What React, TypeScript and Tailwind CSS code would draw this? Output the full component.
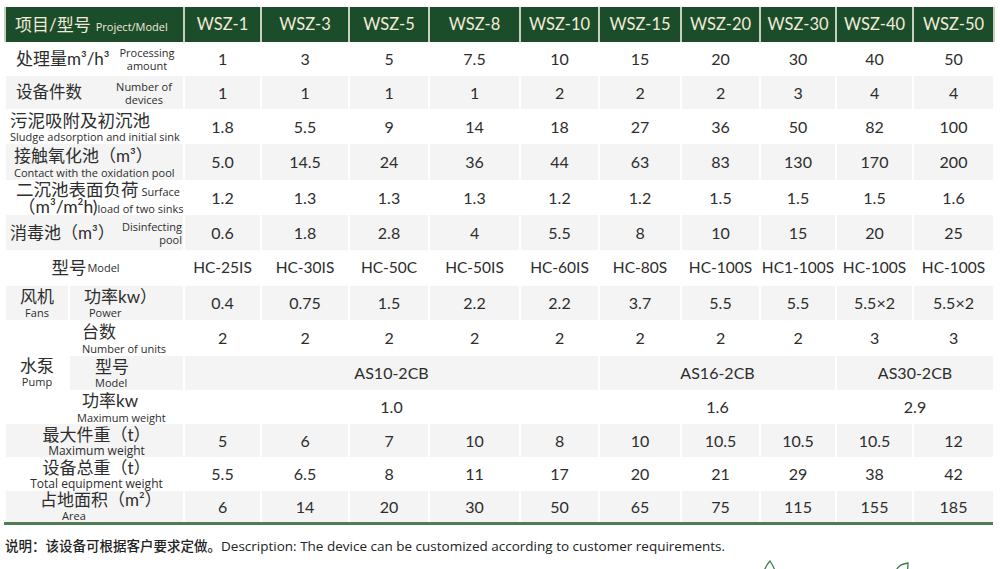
const cols = [64, 115, 77, 88, 80, 91, 79, 82, 79, 76, 77, 81];
const models = ["WSZ-1", "WSZ-3", "WSZ-5", "WSZ-8", "WSZ-10", "WSZ-15", "WSZ-20", "WSZ-30", "WSZ-40", "WSZ-50"];

function Vals({ v }: { v: string[] }) {
  return (
    <>
      {v.map((x, i) => (
        <td key={i} className="border-x-2 border-white text-center p-0 whitespace-nowrap">
          {x}
        </td>
      ))}
    </>
  );
}

// small english captions under / beside the chinese labels
function Small({ children, className = "" }: { children: React.ReactNode; className?: string }) {
  return (
    <span className={"font-['Open_Sans',sans-serif] text-[11px] leading-[12px] whitespace-nowrap " + className}>
      {children}
    </span>
  );
}

export default function App() {
  return (
    <div className="w-[1000px] h-[569px] overflow-hidden bg-white font-['Lato','Noto_Sans_CJK_SC',sans-serif] text-[#2d2d2d]">
      <table className="ml-[4px] mt-[7px] w-[989px] table-fixed border-collapse text-[16px]">
        <colgroup>
          {cols.map((w, i) => (
            <col key={i} style={{ width: w }} />
          ))}
        </colgroup>
        <thead>
          <tr className="h-[35px] bg-[#1c4d2b] text-[#f1ecd9]">
            <td colSpan={2} className="border-x-2 border-[#c9d0c0] p-0 pl-[9px] whitespace-nowrap">
              <span className="text-[17px]">项目/型号</span>
              <span className="font-['Open_Sans',sans-serif] text-[11px] ml-[5px]">Project/Model</span>
            </td>
            {models.map((m) => (
              <td key={m} className="border-x-2 border-[#c9d0c0] text-center p-0 text-[16.5px] whitespace-nowrap">
                {m}
              </td>
            ))}
          </tr>
        </thead>
        <tbody>
          {/* 处理量 */}
          <tr className="h-[34px]">
            <td colSpan={2} className="border-x-2 border-white p-0">
              <div className="flex items-center pl-[10px]">
                <span className="text-[17px] w-[101px]">处理量m³/h³</span>
                <Small className="flex flex-col items-center w-[60px] leading-[13px]">
                  <span>Processing</span>
                  <span>amount</span>
                </Small>
              </div>
            </td>
            <Vals v={["1", "3", "5", "7.5", "10", "15", "20", "30", "40", "50"]} />
          </tr>
          {/* 设备件数 */}
          <tr className="h-[33px] bg-[#f4f4f4]">
            <td colSpan={2} className="border-x-2 border-white p-0">
              <div className="flex items-center pl-[10px]">
                <span className="text-[16.5px] w-[99px]">设备件数</span>
                <Small className="flex flex-col items-center w-[58px] leading-[13px]">
                  <span>Number of</span>
                  <span>devices</span>
                </Small>
              </div>
            </td>
            <Vals v={["1", "1", "1", "1", "2", "2", "2", "3", "4", "4"]} />
          </tr>
          {/* 污泥 */}
          <tr className="h-[35px]">
            <td colSpan={2} className="border-x-2 border-white p-0">
              <div className="flex flex-col pl-[4px]">
                <span className="text-[17.5px] leading-[20px]">污泥吸附及初沉池</span>
                <Small>Sludge adsorption and initial sink</Small>
              </div>
            </td>
            <Vals v={["1.8", "5.5", "9", "14", "18", "27", "36", "50", "82", "100"]} />
          </tr>
          {/* 接触 */}
          <tr className="h-[36px] bg-[#f4f4f4]">
            <td colSpan={2} className="border-x-2 border-white p-0">
              <div className="flex flex-col pl-[8px]">
                <span className="text-[17px] leading-[20px]">接触氧化池（m³）</span>
                <Small className="text-[11.5px] leading-[13px]">Contact with the oxidation pool</Small>
              </div>
            </td>
            <Vals v={["5.0", "14.5", "24", "36", "44", "63", "83", "130", "170", "200"]} />
          </tr>
          {/* 二沉池 */}
          <tr className="h-[35px]">
            <td colSpan={2} className="border-x-2 border-white p-0">
              <div className="flex flex-col pl-[10px]">
                <div className="flex items-end leading-[17px] whitespace-nowrap">
                  <span className="text-[17.5px]">二沉池表面负荷</span>
                  <Small className="ml-[3px] leading-[13px]">Surface</Small>
                </div>
                <div className="flex items-end leading-[17px] whitespace-nowrap pl-[2px]">
                  <span className="text-[17.5px]">（m³/m²h)</span>
                  <Small className="leading-[13px]">load of two sinks</Small>
                </div>
              </div>
            </td>
            <Vals v={["1.2", "1.3", "1.3", "1.3", "1.2", "1.2", "1.5", "1.5", "1.5", "1.6"]} />
          </tr>
          {/* 消毒池 */}
          <tr className="h-[35px] bg-[#f4f4f4]">
            <td colSpan={2} className="border-x-2 border-white p-0">
              <div className="flex items-center pl-[4px]">
                <span className="text-[17px] w-[106px] whitespace-nowrap">消毒池（m³）</span>
                <Small className="flex flex-col items-end w-[66px] leading-[13px]">
                  <span>Disinfecting</span>
                  <span>pool</span>
                </Small>
              </div>
            </td>
            <Vals v={["0.6", "1.8", "2.8", "4", "5.5", "8", "10", "15", "20", "25"]} />
          </tr>
          {/* 型号 */}
          <tr className="h-[36px] text-[15.5px]">
            <td colSpan={2} className="border-x-2 border-white p-0">
              <div className="flex items-center justify-center pr-[18px]">
                <span className="text-[17.5px]">型号</span>
                <Small className="ml-[1px]">Model</Small>
              </div>
            </td>
            <Vals v={["HC-25IS", "HC-30IS", "HC-50C", "HC-50IS", "HC-60IS", "HC-80S", "HC-100S", "HC1-100S", "HC-100S", "HC-100S"]} />
          </tr>
          {/* 风机 */}
          <tr className="h-[34px] bg-[#f4f4f4]">
            <td className="border-x-2 border-white p-0">
              <div className="flex flex-col items-center">
                <span className="text-[17px] leading-[20px]">风机</span>
                <Small>Fans</Small>
              </div>
            </td>
            <td className="border-x-2 border-white p-0">
              <div className="flex flex-col pl-[14px]">
                <span className="text-[17px] leading-[20px] whitespace-nowrap">功率kw）</span>
                <Small className="pl-[5px]">Power</Small>
              </div>
            </td>
            <Vals v={["0.4", "0.75", "1.5", "2.2", "2.2", "3.7", "5.5", "5.5", "5.5×2", "5.5×2"]} />
          </tr>
          {/* 水泵 台数 */}
          <tr className="h-[36px]">
            <td rowSpan={3} className="border-x-2 border-white p-0 bg-white">
              <div className="flex flex-col items-center">
                <span className="text-[17px] leading-[20px]">水泵</span>
                <Small>Pump</Small>
              </div>
            </td>
            <td className="border-x-2 border-white p-0">
              <div className="flex flex-col pl-[12px]">
                <span className="text-[17px] leading-[20px]">台数</span>
                <Small className="text-[11.5px] leading-[13px]">Number of units</Small>
              </div>
            </td>
            <Vals v={["2", "2", "2", "2", "2", "2", "2", "2", "3", "3"]} />
          </tr>
          <tr className="h-[34px] bg-[#f4f4f4]">
            <td className="border-x-2 border-white p-0">
              <div className="flex flex-col pl-[25px]">
                <span className="text-[17px] leading-[20px]">型号</span>
                <Small>Model</Small>
              </div>
            </td>
            <td colSpan={5} className="border-x-2 border-white text-center p-0">AS10-2CB</td>
            <td colSpan={3} className="border-x-2 border-white text-center p-0">AS16-2CB</td>
            <td colSpan={2} className="border-x-2 border-white text-center p-0">AS30-2CB</td>
          </tr>
          <tr className="h-[34px]">
            <td className="border-x-2 border-white p-0">
              <div className="flex flex-col pl-[7px]">
                <span className="text-[17px] leading-[20px] pl-[5px]">功率kw</span>
                <Small className="text-[11.5px] leading-[13px]">Maximum weight</Small>
              </div>
            </td>
            <td colSpan={5} className="border-x-2 border-white text-center p-0">1.0</td>
            <td colSpan={3} className="border-x-2 border-white text-center p-0">1.6</td>
            <td colSpan={2} className="border-x-2 border-white text-center p-0">2.9</td>
          </tr>
          {/* 最大件重 */}
          <tr className="h-[33px] bg-[#f4f4f4]">
            <td colSpan={2} className="border-x-2 border-white p-0">
              <div className="flex flex-col items-center pl-[4px]">
                <span className="text-[17px] leading-[19px] whitespace-nowrap">最大件重（t）</span>
                <Small className="text-[12px] leading-[13px]">Maximum weight</Small>
              </div>
            </td>
            <Vals v={["5", "6", "7", "10", "8", "10", "10.5", "10.5", "10.5", "12"]} />
          </tr>
          {/* 设备总重 */}
          <tr className="h-[34px]">
            <td colSpan={2} className="border-x-2 border-white p-0">
              <div className="flex flex-col items-center pl-[4px]">
                <span className="text-[17px] leading-[19px] whitespace-nowrap">设备总重（t）</span>
                <Small className="text-[12px] leading-[13px]">Total equipment weight</Small>
              </div>
            </td>
            <Vals v={["5.5", "6.5", "8", "11", "17", "20", "21", "29", "38", "42"]} />
          </tr>
          {/* 占地面积 */}
          <tr className="h-[31px] bg-[#f4f4f4]">
            <td colSpan={2} className="border-x-2 border-white p-0">
              <div className="flex flex-col pl-[34px]">
                <span className="text-[17px] leading-[18px] whitespace-nowrap">占地面积（m²）</span>
                <Small className="pl-[22px] leading-[13px]">Area</Small>
              </div>
            </td>
            <Vals v={["6", "14", "20", "30", "50", "65", "75", "115", "155", "185"]} />
          </tr>
        </tbody>
      </table>
      <div className="ml-[4px] w-[989px] h-[3px] bg-[#4e7d55]" />
      <div className="flex items-center pl-[5px] pt-[11px] text-[#222] whitespace-nowrap">
        <span className="text-[13.5px] font-medium">说明：该设备可根据客户要求定做。</span>
        <span className="font-['Open_Sans',sans-serif] text-[13.5px]">
          Description: The device can be customized according to customer requirements.
        </span>
      </div>
      <div className="flex pt-[2px]">
        <svg className="ml-[760px]" width="20" height="14" viewBox="0 0 20 14">
          <path d="M4 13 C6 8 8 5 10 3 C12 6 14 9 15 13" fill="none" stroke="#3f7a4e" strokeWidth="1.3" />
        </svg>
        <svg className="ml-[114px]" width="20" height="14" viewBox="0 0 20 14">
          <path d="M2 13 C4 7 9 6 14 5 C14 8 14 11 13 13" fill="none" stroke="#3f7a4e" strokeWidth="1.3" />
        </svg>
      </div>
    </div>
  );
}
